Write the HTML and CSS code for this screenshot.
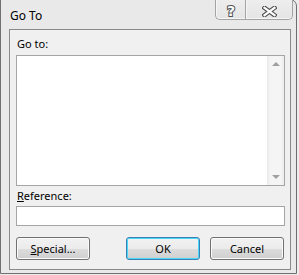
FILE: index.html
```html
<!DOCTYPE html>
<html lang="en">
<head>
    <meta charset="UTF-8">
    <meta name="viewport" content="width=device-width, initial-scale=1.0">
    <title>Go To</title>
    <link rel="stylesheet" href="styles.css">
</head>
<body>
    <div class="window">
        <div class="titlebar">
            <span class="title">Go To</span>
            <div class="caption-buttons">
                <div class="cap-btn help">
                    <svg width="12" height="13" viewBox="0 0 12 13">
                        <text x="6" y="11.5" text-anchor="middle" class="glyph">?</text>
                    </svg>
                </div>
                <div class="cap-btn close">
                    <svg width="15" height="11" viewBox="0 0 15 11">
                        <path class="x-out" d="M2.5 1.8 L12.5 9.2 M12.5 1.8 L2.5 9.2"/>
                        <path class="x-in" d="M2.5 1.8 L12.5 9.2 M12.5 1.8 L2.5 9.2"/>
                    </svg>
                </div>
            </div>
        </div>
        <div class="client">
            <label class="field-label">Go to:</label>
            <div class="listbox">
                <div class="list-items"></div>
                <div class="scrollbar">
                    <div class="scroll-btn"><span class="arrow up"></span></div>
                    <div class="scroll-btn"><span class="arrow down"></span></div>
                </div>
            </div>
            <label class="field-label ref" for="reference"><u>R</u>eference:</label>
            <input type="text" id="reference" class="ref-input">
            <div class="buttons">
                <button class="btn"><u>S</u>pecial...</button>
                <button class="btn default">OK</button>
                <button class="btn">Cancel</button>
            </div>
        </div>
    </div>
</body>
</html>
```

FILE: styles.css
```css
body {
    margin: 0;
    background-color: #ececec;
    font-family: "Noto Sans", "Open Sans", sans-serif;
    font-size: 11px;
    color: #000;
}
.window {
    width: 297px;
    height: 275px;
    margin-top: -1px;
    box-sizing: border-box;
    border: 1px solid #707070;
    border-top-right-radius: 7px;
    background-color: #e9e9e9;
}
.titlebar {
    display: flex;
    justify-content: space-between;
    height: 29px;
}
.title {
    padding: 8px 0 0 9px;
    font-size: 12px;
    line-height: 15px;
}
.caption-buttons {
    display: flex;
    height: 20px;
    margin-right: 3px;
}
.cap-btn {
    display: flex;
    justify-content: center;
    box-sizing: border-box;
    border: 1px solid #a3a3a3;
    border-top: none;
    background: linear-gradient(#eeeeee, #e4e4e4);
    box-shadow: inset 0 -1px 0 #f6f6f6, inset 1px 0 0 #f6f6f6;
}
.help {
    width: 30px;
    padding-top: 4px;
    border-right: none;
    border-bottom-left-radius: 5px;
}
.close {
    width: 48px;
    padding-top: 6px;
    border-bottom-right-radius: 5px;
}
.glyph {
    font-family: "DejaVu Sans", sans-serif;
    font-size: 14px;
    font-weight: bold;
    fill: #fff;
    stroke: #505050;
    stroke-width: 2px;
    paint-order: stroke;
}
.x-out {
    stroke: #505050;
    stroke-width: 4.4px;
    stroke-linecap: square;
    fill: none;
}
.x-in {
    stroke: #fff;
    stroke-width: 2.2px;
    stroke-linecap: square;
    fill: none;
}
.client {
    display: flex;
    flex-direction: column;
    height: 241px;
    margin: 0 5px 0 8px;
    padding: 6px 5px 9px 6px;
    box-sizing: border-box;
    border: 1px solid #8a8a8a;
    background-color: #f0f0f0;
}
.field-label {
    display: block;
    padding-left: 1px;
    line-height: 15px;
    margin-bottom: 4px;
}
.field-label.ref {
    margin: 2px 0 3px;
}
.listbox {
    display: flex;
    height: 131px;
    box-sizing: border-box;
    border: 1px solid #a5a5a5;
    background-color: #fff;
}
.list-items {
    flex: 1;
}
.scrollbar {
    display: flex;
    flex-direction: column;
    justify-content: space-between;
    width: 17px;
    background: linear-gradient(to right, #e9e9e9, #f5f5f5 20%, #f5f5f5 80%, #ececec);
}
.scroll-btn {
    display: flex;
    justify-content: center;
    align-items: center;
    height: 17px;
}
.arrow {
    width: 0;
    height: 0;
    border-left: 4px solid transparent;
    border-right: 4px solid transparent;
}
.arrow.up {
    border-bottom: 4px solid #a0a0a0;
    margin-top: -1px;
}
.arrow.down {
    border-top: 4px solid #a0a0a0;
    margin-top: 1px;
}
.ref-input {
    height: 20px;
    margin: 0;
    padding: 0 3px;
    box-sizing: border-box;
    border: 1px solid #a5a5a5;
    background-color: #fff;
    font: inherit;
}
.buttons {
    display: flex;
    gap: 10px;
    margin-top: 11px;
    padding-right: 1px;
}
.btn {
    width: 74px;
    height: 23px;
    padding: 0;
    border: 1px solid #707070;
    border-radius: 3px;
    background: linear-gradient(#f2f2f2, #ebebeb 50%, #dddddd 50%, #cfcfcf);
    box-shadow: inset 0 0 0 1px #fbfbfb;
    font-family: inherit;
    font-size: 11px;
    color: #000;
}
.btn.default {
    margin-left: auto;
    border-color: #3c7fb1;
    box-shadow: inset 0 0 0 1px #48d8fb;
}
```
